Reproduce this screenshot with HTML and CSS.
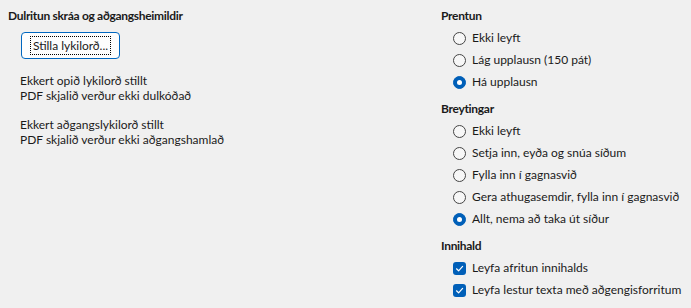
FILE: index.html
```html
<!DOCTYPE html>
<html lang="is">
<head>
<meta charset="utf-8">
<link rel="stylesheet" href="styles.css">
</head>
<body>
<div class="page">
  <section class="left">
    <h2 class="heading">Dulritun skráa og aðgangsheimildir</h2>
    <button class="btn"><span class="focus">Stilla lykilorð...</span></button>
    <p class="info">Ekkert opið lykilorð stillt<br>PDF skjalið verður ekki dulkóðað</p>
    <p class="info">Ekkert aðgangslykilorð stillt<br>PDF skjalið verður ekki aðgangshamlað</p>
  </section>
  <section class="right">
    <div class="group">
      <h2 class="heading">Prentun</h2>
      <ul class="opts">
        <li class="opt"><span class="radio"></span>Ekki leyft</li>
        <li class="opt"><span class="radio"></span>Lág upplausn (150 pát)</li>
        <li class="opt"><span class="radio on"></span>Há upplausn</li>
      </ul>
    </div>
    <div class="group">
      <h2 class="heading">Breytingar</h2>
      <ul class="opts">
        <li class="opt"><span class="radio"></span>Ekki leyft</li>
        <li class="opt"><span class="radio"></span>Setja inn, eyða og snúa síðum</li>
        <li class="opt"><span class="radio"></span>Fylla inn í gagnasvið</li>
        <li class="opt"><span class="radio"></span>Gera athugasemdir, fylla inn í gagnasvið</li>
        <li class="opt"><span class="radio on"></span>Allt, nema að taka út síður</li>
      </ul>
    </div>
    <div class="group">
      <h2 class="heading">Innihald</h2>
      <ul class="opts">
        <li class="opt"><span class="check"><svg viewBox="0 0 13 13" width="13" height="13"><path d="M3.5 6.8 L5.6 8.8 L9.6 4.4" fill="none" stroke="#fff" stroke-width="1.2" stroke-linecap="round" stroke-linejoin="round"/></svg></span>Leyfa afritun innihalds</li>
        <li class="opt"><span class="check"><svg viewBox="0 0 13 13" width="13" height="13"><path d="M3.5 6.8 L5.6 8.8 L9.6 4.4" fill="none" stroke="#fff" stroke-width="1.2" stroke-linecap="round" stroke-linejoin="round"/></svg></span>Leyfa lestur texta með aðgengisforritum</li>
      </ul>
    </div>
  </section>
</div>
</body>
</html>
```

FILE: styles.css
```css
* { box-sizing: border-box; }
html, body {
  margin: 0;
  padding: 0;
  background: #f0f0f0;
  width: 691px;
  height: 308px;
  overflow: hidden;
}
body {
  font-family: "Lato", "Noto Sans", sans-serif;
  font-size: 12px;
  color: #1a1a1a;
}
.page {
  display: grid;
  grid-template-columns: 433px 1fr;
  padding: 8px 0 0 8px;
  white-space: nowrap;
}
.heading {
  margin: 0;
  font-size: 12px;
  font-weight: 700;
  letter-spacing: -0.3px;
  line-height: 16px;
  height: 16px;
}
.left .btn {
  margin: 8px 0 0 13px;
  width: 99px;
  height: 27px;
  padding: 0;
  background: #fdfdfd;
  border: 1px solid #0067c0;
  border-radius: 4px;
  font: inherit;
  color: #1a1a1a;
  display: flex;
  align-items: center;
  justify-content: center;
}
.focus {
  outline: 1px dotted #000;
  outline-offset: 0;
  line-height: 17px;
  padding: 0 2px;
}
.info {
  margin: 14px 0 0 12px;
  line-height: 15px;
}
.info + .info { margin-top: 14px; }
.group { margin-bottom: 8px; }
.opts {
  list-style: none;
  margin: 3px 0 0;
  padding: 0 0 0 12px;
}
.opt {
  display: flex;
  align-items: center;
  height: 22px;
  line-height: 22px;
}
.radio {
  width: 13px;
  height: 13px;
  border: 1px solid #454545;
  border-radius: 50%;
  background: #f7f7f7;
  margin-right: 6px;
  flex: none;
  display: flex;
  align-items: center;
  justify-content: center;
}
.radio.on {
  background: #005fb8;
  border-color: #005fb8;
}
.radio.on::after {
  content: "";
  width: 5px;
  height: 5px;
  border-radius: 50%;
  background: #fff;
}
.check {
  width: 13px;
  height: 13px;
  border-radius: 3px;
  background: #005fb8;
  margin-right: 6px;
  flex: none;
  display: flex;
}
```
